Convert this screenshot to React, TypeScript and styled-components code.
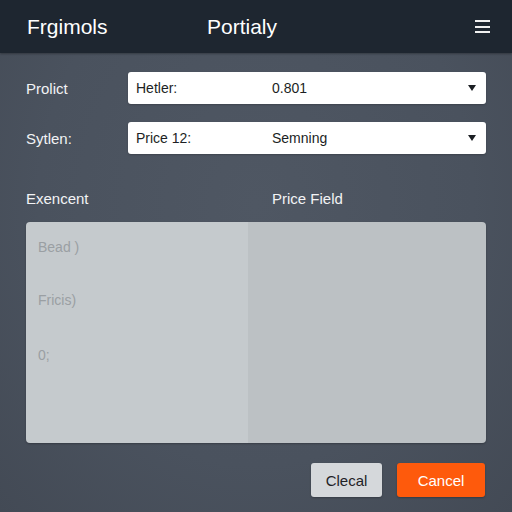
import React, { FC } from 'react'
import styled, { createGlobalStyle } from 'styled-components'

const GlobalStyle = createGlobalStyle`
  *, *::before, *::after {
    box-sizing: border-box;
  }
  html, body {
    margin: 0;
    padding: 0;
    width: 512px;
    height: 512px;
    overflow: hidden;
    font-family: 'Liberation Sans', Arial, sans-serif;
  }
`

const Page = styled.div`
  width: 512px;
  height: 512px;
  display: flex;
  flex-direction: column;
  background: radial-gradient(ellipse at 50% 40%, #4f5763 0%, #4a525e 60%, #434a55 100%);
`

const Header = styled.header`
  height: 53px;
  flex-shrink: 0;
  display: flex;
  align-items: center;
  padding: 0 22px 0 27px;
  background: #1e2630;
  color: #ffffff;
  font-size: 21px;
  box-shadow: 0 1px 2px rgba(0, 0, 0, 0.3);
`

const Brand = styled.div`
  width: 180px;
`

const Title = styled.div`
  flex: 1;
`

const Burger = styled.div`
  width: 15px;
  display: flex;
  flex-direction: column;
  gap: 3.5px;
  span {
    display: block;
    height: 2px;
    background: #f0f0f0;
  }
`

const Body = styled.main`
  flex: 1;
  display: flex;
  flex-direction: column;
  padding: 19px 26px 15px 26px;
`

const FieldRow = styled.div<{ gap?: number }>`
  display: flex;
  align-items: center;
  margin-bottom: ${p => p.gap ?? 18}px;
`

const FieldLabel = styled.div`
  width: 102px;
  color: #f2f3f5;
  font-size: 15px;
`

const Select = styled.div`
  flex: 1;
  height: 32px;
  display: flex;
  align-items: center;
  padding: 0 10px 0 8px;
  background: #ffffff;
  border-radius: 3px;
  color: #1c1f24;
  font-size: 14px;
  box-shadow: 0 1px 2px rgba(0, 0, 0, 0.2);
`

const SelectKey = styled.span`
  width: 136px;
`

const SelectValue = styled.span`
  flex: 1;
`

const Caret = styled.span`
  width: 0;
  height: 0;
  border-left: 4.5px solid transparent;
  border-right: 4.5px solid transparent;
  border-top: 6px solid #1c1f24;
`

const SectionHeads = styled.div`
  display: flex;
  color: #f2f3f5;
  font-size: 15px;
  margin-top: 36px;
  margin-bottom: 15px;
`

const SectionHead = styled.div<{ width?: number }>`
  width: ${p => (p.width ? `${p.width}px` : 'auto')};
`

const Panel = styled.div`
  height: 221px;
  display: flex;
  border-radius: 4px;
  overflow: hidden;
  box-shadow: 0 1px 2px rgba(0, 0, 0, 0.25);
`

const PanelHalf = styled.div<{ tone: string; width?: number }>`
  ${p => (p.width ? `width: ${p.width}px;` : 'flex: 1;')}
  background: ${p => p.tone};
  display: flex;
  flex-direction: column;
  padding: 17px 12px;
  color: #9a9fa3;
  font-size: 14px;
`

const PanelLine = styled.div<{ gap: number }>`
  margin-bottom: ${p => p.gap}px;
`

const Actions = styled.div`
  margin-top: auto;
  display: flex;
  justify-content: flex-end;
  gap: 15px;
  padding-right: 1px;
`

const Button = styled.button<{ primary?: boolean; width: number }>`
  width: ${p => p.width}px;
  height: 34px;
  border: none;
  border-radius: 3px;
  font-family: 'Liberation Sans', Arial, sans-serif;
  font-size: 15px;
  background: ${p => (p.primary ? '#fe5a0c' : '#d5d8db')};
  color: ${p => (p.primary ? '#ffffff' : '#1f2226')};
  box-shadow: 0 1px 2px rgba(0, 0, 0, 0.25);
`

const App: FC = () => (
  <>
    <GlobalStyle />
    <Page>
      <Header>
        <Brand>Frgimols</Brand>
        <Title>Portialy</Title>
        <Burger>
          <span />
          <span />
          <span />
        </Burger>
      </Header>
      <Body>
        <FieldRow>
          <FieldLabel>Prolict</FieldLabel>
          <Select>
            <SelectKey>Hetler:</SelectKey>
            <SelectValue>0.801</SelectValue>
            <Caret />
          </Select>
        </FieldRow>
        <FieldRow gap={0}>
          <FieldLabel>Sytlen:</FieldLabel>
          <Select>
            <SelectKey>Price 12:</SelectKey>
            <SelectValue>Semning</SelectValue>
            <Caret />
          </Select>
        </FieldRow>
        <SectionHeads>
          <SectionHead width={246}>Exencent</SectionHead>
          <SectionHead>Price Field</SectionHead>
        </SectionHeads>
        <Panel>
          <PanelHalf tone="#c5cacd" width={222}>
            <PanelLine gap={37}>Bead )</PanelLine>
            <PanelLine gap={39}>Fricis)</PanelLine>
            <PanelLine gap={0}>0;</PanelLine>
          </PanelHalf>
          <PanelHalf tone="#bcc1c4" />
        </Panel>
        <Actions>
          <Button width={71}>Clecal</Button>
          <Button primary width={88}>Cancel</Button>
        </Actions>
      </Body>
    </Page>
  </>
)

export default App
